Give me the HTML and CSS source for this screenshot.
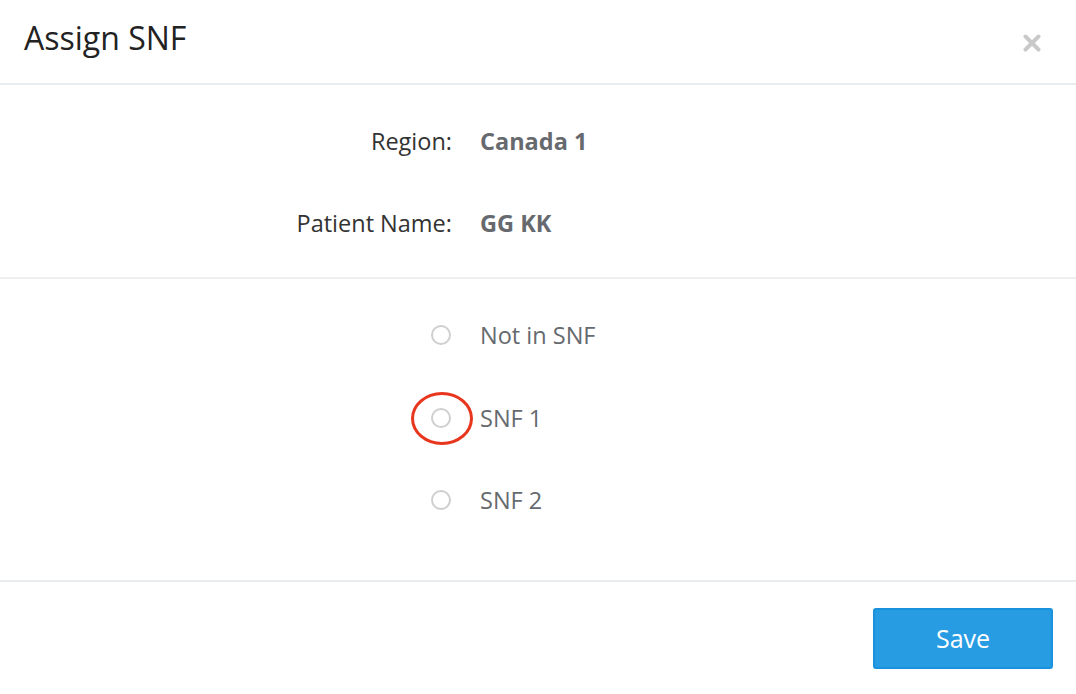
FILE: index.html
```html
<!DOCTYPE html>
<html>
<head>
<meta charset="utf-8">
<link rel="stylesheet" href="styles.css">
</head>
<body>
<div class="modal">
  <div class="header">
    <h1 class="title">Assign SNF</h1>
    <span class="close" aria-label="close">
      <svg width="18" height="18" viewBox="0 0 18 18"><path d="M2.5 2.5 L15.5 15.5 M15.5 2.5 L2.5 15.5" stroke="#c9c9c9" stroke-width="4" stroke-linecap="round" fill="none"/></svg>
    </span>
  </div>
  <div class="section info">
    <div class="label">Region:</div><div class="value">Canada 1</div>
    <div class="label">Patient Name:</div><div class="value">GG KK</div>
  </div>
  <div class="section options">
    <div class="radio-cell"><span class="radio"></span></div><div class="opt">Not in SNF</div>
    <div class="radio-cell"><span class="radio"></span><span class="mark"></span></div><div class="opt">SNF 1</div>
    <div class="radio-cell"><span class="radio"></span></div><div class="opt">SNF 2</div>
  </div>
  <div class="footer">
    <button class="save">Save</button>
  </div>
</div>
</body>
</html>
```
FILE: styles.css
```css
html, body {
  margin: 0;
  padding: 0;
  background: #fff;
}
body {
  font-family: "Open Sans", "Noto Sans", sans-serif;
}
.modal {
  width: 1076px;
  height: 694px;
  display: flex;
  flex-direction: column;
}
.header {
  height: 83px;
  border-bottom: 2px solid #e9ecef;
  display: flex;
  align-items: flex-start;
  justify-content: space-between;
  box-sizing: content-box;
}
.title {
  margin: 0;
  padding: 17px 0 0 24px;
  font-size: 32px;
  font-weight: 400;
  line-height: 42px;
  color: #222;
}
.close {
  margin: 34px 35px 0 0;
  display: block;
  width: 18px;
  height: 18px;
}
.close svg { display: block; }
.section {
  display: grid;
  grid-template-columns: 452px 1fr;
  column-gap: 28px;
  border-bottom: 2px solid #efefef;
  align-items: center;
}
.info {
  padding: 15px 0 13px;
  grid-auto-rows: 82px;
}
.options {
  padding: 15px 0 38px;
  grid-auto-rows: 82.5px;
  border-bottom-color: #e9ecef;
}
.label {
  text-align: right;
  font-size: 23.5px;
  color: #333;
}
.value {
  font-size: 23.5px;
  font-weight: 700;
  color: #666a6e;
}
.radio-cell {
  position: relative;
  display: flex;
  justify-content: flex-end;
  padding-right: 1px;
}
.radio {
  display: block;
  width: 16px;
  height: 16px;
  border: 2px solid #cfcfcf;
  border-radius: 50%;
}
.mark {
  position: absolute;
  right: -21px;
  top: 50%;
  width: 56px;
  height: 47px;
  margin-top: -26px;
  border: 3px solid #e8361e;
  border-radius: 50%;
}
.opt {
  font-size: 23.5px;
  color: #666a6e;
}
.footer {
  flex: 1;
  display: flex;
  justify-content: flex-end;
  align-items: flex-start;
  padding: 26px 23px 0 0;
}
.save {
  width: 180px;
  height: 61px;
  background: #279ce3;
  border: 2px solid #1a91dc;
  border-radius: 3px;
  color: #fff;
  font-family: "Open Sans", "Noto Sans", sans-serif;
  font-size: 25px;
  padding: 0;
}
```
